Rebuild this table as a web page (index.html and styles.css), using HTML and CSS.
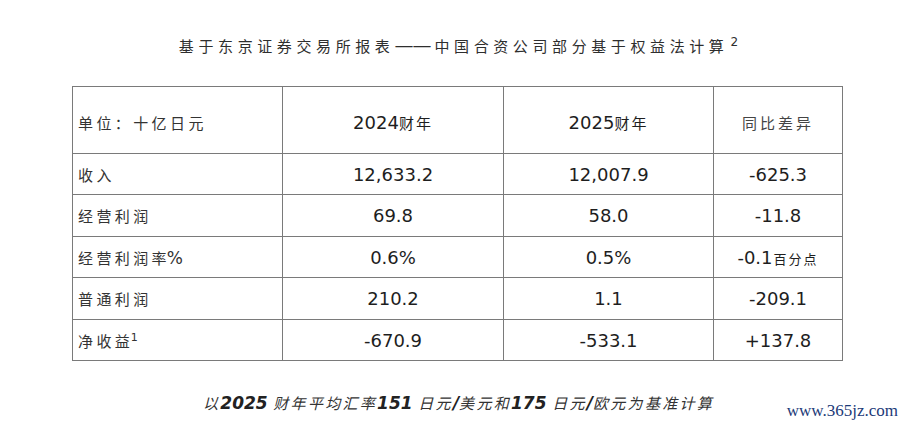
FILE: index.html
```html
<!DOCTYPE html>
<html lang="zh-CN">
<head>
<meta charset="utf-8">
<title>财务表</title>
<link rel="stylesheet" href="styles.css">
</head>
<body>
<div class="page">
  <h1 class="title">基于东京证券交易所报表<span class="dash">——</span>中国合资公司部分基于权益法计算<sup class="sup">2</sup></h1>
  <table class="fin">
    <colgroup>
      <col class="c1"><col class="c2"><col class="c3"><col class="c4">
    </colgroup>
    <tr class="head">
      <td class="label">单位：十亿日元</td>
      <td class="num">2024<span class="cjk">财年</span></td>
      <td class="num">2025<span class="cjk">财年</span></td>
      <td class="num"><span class="cjk light">同比差异</span></td>
    </tr>
    <tr class="r41">
      <td class="label">收入</td>
      <td class="num">12,633.2</td>
      <td class="num">12,007.9</td>
      <td class="num">-625.3</td>
    </tr>
    <tr class="r42">
      <td class="label">经营利润</td>
      <td class="num">69.8</td>
      <td class="num">58.0</td>
      <td class="num">-11.8</td>
    </tr>
    <tr class="r41">
      <td class="label">经营利润<span class="tight">率</span><span class="pct">%</span></td>
      <td class="num">0.6%</td>
      <td class="num">0.5%</td>
      <td class="num">-0.1<span class="cjk small">百分点</span></td>
    </tr>
    <tr class="r42">
      <td class="label">普通利润</td>
      <td class="num">210.2</td>
      <td class="num">1.1</td>
      <td class="num">-209.1</td>
    </tr>
    <tr class="r41">
      <td class="label">净收<span class="tight">益</span><sup class="sup1">1</sup></td>
      <td class="num">-670.9</td>
      <td class="num">-533.1</td>
      <td class="num">+137.8</td>
    </tr>
  </table>
  <div class="foot">
    <p class="note">以<b>2025</b> 财年平均汇率<b>151</b> 日元<b>/</b>美元和<b>175</b> 日元<b>/</b>欧元为基准计算</p>
    <span class="mark">www.365jz.com</span>
  </div>
</div>
</body>
</html>
```
FILE: styles.css
```css
html, body {
  margin: 0;
  padding: 0;
  background: #ffffff;
}
.page {
  width: 907px;
  height: 425px;
  overflow: hidden;
  font-family: "Noto Sans CJK SC", "DejaVu Sans", sans-serif;
  color: #2a2a2a;
}
.title {
  margin: 0;
  padding: 35px 0 0 10px;
  height: 86px;
  box-sizing: border-box;
  text-align: center;
  font-size: 15px;
  line-height: 20px;
  font-weight: 400;
  letter-spacing: 4.6px;
  color: #2e2e2e;
  white-space: nowrap;
}
.dash {
  font-family: "DejaVu Sans", sans-serif;
  font-size: 19px;
  letter-spacing: -1px;
  margin-right: 4px;
}
.sup {
  font-family: "DejaVu Sans", sans-serif;
  font-size: 12px;
  letter-spacing: 0;
  vertical-align: 6px;
  line-height: 0;
  margin-left: 2px;
}
.fin {
  margin-left: 72px;
  width: 770px;
  border-collapse: collapse;
  table-layout: fixed;
}
.c1 { width: 210px; }
.c2 { width: 221px; }
.c3 { width: 210px; }
.c4 { width: 129px; }
.fin td {
  border: 1px solid #7a7a7a;
  padding: 0;
  vertical-align: middle;
}
.head { height: 67px; }
.head td { padding-top: 4px; }
.r41 { height: 41px; }
.r42 { height: 42px; }
.label {
  padding-left: 5px !important;
  font-size: 15px;
  letter-spacing: 3.4px;
  color: #333;
  white-space: nowrap;
}
.tight { letter-spacing: 0; }
.num {
  text-align: center;
  font-family: "DejaVu Sans", sans-serif;
  font-size: 18px;
  color: #1e1e1e;
  white-space: nowrap;
}
.cjk {
  font-family: "Noto Sans CJK SC", sans-serif;
  font-size: 15px;
  letter-spacing: 2px;
}
.light { color: #444; letter-spacing: 3px; }
.small { font-size: 13px; letter-spacing: 2px; margin-left: 1px; }
.pct {
  font-family: "DejaVu Sans", sans-serif;
  font-size: 17px;
  letter-spacing: 0;
}
.sup1 {
  font-family: "DejaVu Sans", sans-serif;
  font-size: 11px;
  letter-spacing: 0;
  vertical-align: 6px;
  line-height: 0;
  margin-left: 1px;
}
.foot {
  display: flex;
  align-items: flex-start;
  justify-content: space-between;
  padding: 31px 9px 0 203px;
}
.note {
  margin: 0;
  font-style: italic;
  font-size: 15px;
  line-height: 22px;
  letter-spacing: 2.3px;
  color: #333;
  white-space: nowrap;
}
.note b {
  font-family: "DejaVu Sans", sans-serif;
  font-weight: 700;
  font-size: 17px;
  letter-spacing: 0;
  color: #222;
}
.mark {
  margin-top: 9px;
  font-family: "Liberation Serif", serif;
  font-size: 17px;
  line-height: 20px;
  color: #1c3a78;
}
```
